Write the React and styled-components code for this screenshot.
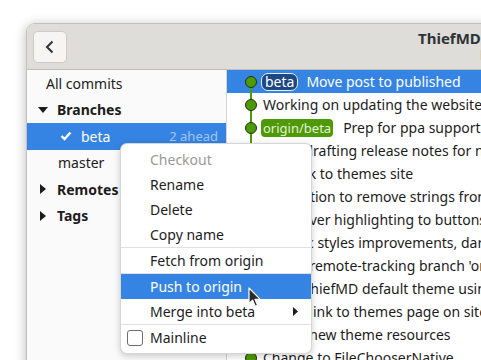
import React from "react";
import styled, { createGlobalStyle } from "styled-components";

const GlobalStyle = createGlobalStyle`
  html, body {
    margin: 0;
    padding: 0;
    background: #ffffff;
  }
  body {
    font-family: "Noto Sans", "DejaVu Sans", sans-serif;
    overflow: hidden;
  }
`;

const Screen = styled.div`
  position: relative;
  width: 481px;
  height: 360px;
  overflow: hidden;
  box-sizing: border-box;
  padding: 23px 0 0 26px;
`;

const Window = styled.div`
  width: 850px;
  height: 420px;
  display: flex;
  flex-direction: column;
  background: #ffffff;
  border: 1px solid rgba(0, 0, 0, 0.24);
  border-bottom: none;
  border-radius: 9px 9px 0 0;
  box-shadow: 0 2px 12px rgba(0, 0, 0, 0.28);
  overflow: hidden;
`;

const HeaderBar = styled.header`
  flex: none;
  height: 46px;
  box-sizing: border-box;
  display: flex;
  align-items: center;
  padding: 0 6px;
  background: #deddda;
  border-bottom: 1px solid #c0bfbc;
`;

const BackButton = styled.button`
  width: 34px;
  height: 32px;
  display: flex;
  align-items: center;
  justify-content: center;
  padding: 0;
  background: #f6f5f4;
  border: 1px solid #cdc9c5;
  border-radius: 5px;
  color: #2e3436;
`;

const TitleBox = styled.div`
  margin-left: 351px;
  display: flex;
  flex-direction: column;
  line-height: 17px;
`;

const Title = styled.div`
  font-size: 15px;
  font-weight: 700;
  color: #2e3436;
`;

const Subtitle = styled.div`
  margin-left: 62px;
  font-size: 12px;
  color: #77767b;
`;

const Body = styled.div`
  flex: 1;
  display: flex;
  min-height: 0;
`;

const Sidebar = styled.nav`
  flex: none;
  width: 200px;
  box-sizing: border-box;
  background: #fafafa;
  border-right: 1px solid #d6d4d1;
`;

const SideRow = styled.div`
  height: 26.5px;
  display: flex;
  align-items: center;
  box-sizing: border-box;
  padding: 0 8px 0 ${(p) => p.$indent}px;
  font-size: 14px;
  font-weight: ${(p) => (p.$bold ? 700 : 400)};
  color: ${(p) => (p.$selected ? "#ffffff" : "#1c1c1c")};
  background: ${(p) => (p.$selected ? "#3584e4" : "transparent")};
`;

const Expander = styled.span`
  width: 16px;
  margin-right: 6px;
  display: flex;
  align-items: center;
  justify-content: center;
`;

const CheckSlot = styled.span`
  width: 16px;
  margin-right: 7px;
  display: flex;
  align-items: center;
  justify-content: center;
`;

const Ahead = styled.span`
  margin-left: auto;
  font-size: 13px;
  color: rgba(255, 255, 255, 0.55);
`;

const CommitList = styled.div`
  flex: 1;
  background: #ffffff;
`;

const CommitRow = styled.div`
  height: 23px;
  display: flex;
  align-items: center;
  white-space: nowrap;
  font-size: 14px;
  color: ${(p) => (p.$selected ? "#ffffff" : "#1c1c1c")};
  background: ${(p) => (p.$selected ? "#3584e4" : "transparent")};
`;

const Graph = styled.span`
  position: relative;
  flex: none;
  width: 34px;
  height: 100%;

  &::before {
    content: "";
    position: absolute;
    left: 23px;
    width: 2px;
    top: ${(p) => (p.$first ? "50%" : "0")};
    bottom: 0;
    background: #4e9a06;
  }
`;

const Dot = styled.span`
  position: absolute;
  left: 18px;
  top: 50%;
  width: 12px;
  height: 12px;
  margin-top: -6px;
  box-sizing: border-box;
  border-radius: 50%;
  background: #4e9a06;
  border: 1px solid #1f3307;
`;

const Tag = styled.span`
  flex: none;
  height: 18px;
  display: inline-flex;
  align-items: center;
  box-sizing: border-box;
  padding: 0 ${(p) => (p.$remote ? 2 : 3)}px;
  margin-right: ${(p) => (p.$remote ? 8 : 6)}px;
  font-size: ${(p) => (p.$remote ? 13 : 14)}px;
  border-radius: ${(p) => (p.$remote ? 4 : 7)}px;
  color: ${(p) => (p.$remote ? "#e4f0d8" : "#ffffff")};
  background: ${(p) => (p.$remote ? "#4e9a06" : "#1c4886")};
  border: ${(p) => (p.$remote ? "none" : "1px solid #e8effa")};
`;

const CommitText = styled.span`
  margin-left: 2px;
`;

const Menu = styled.div`
  position: absolute;
  left: 120px;
  top: 143px;
  width: 192px;
  box-sizing: border-box;
  padding: 3px 0;
  background: #ffffff;
  border: 1px solid rgba(0, 0, 0, 0.16);
  border-radius: 7px;
  box-shadow: 0 2px 7px rgba(0, 0, 0, 0.2);
  font-size: 14px;
`;

const MenuItem = styled.div`
  height: 25px;
  display: flex;
  align-items: center;
  padding: 0 13px 0 6px;
  color: ${(p) => (p.$disabled ? "#9a9996" : p.$active ? "#ffffff" : "#1c1c1c")};
  background: ${(p) => (p.$active ? "#3584e4" : "transparent")};
`;

const Lead = styled.span`
  width: 16px;
  height: 16px;
  margin-right: 7px;
  flex: none;
`;

const CheckBox = styled(Lead)`
  box-sizing: border-box;
  border: 1px solid #6f6f6f;
  border-radius: 3px;
  background: #ffffff;
`;

const SubArrow = styled.svg`
  margin-left: auto;
`;

const Separator = styled.div`
  height: 1px;
  background: #e2e0de;
`;

const Cursor = styled.svg`
  position: absolute;
  left: 248px;
  top: 287px;
`;

const DownTri = () => (
  <svg width="10" height="6" viewBox="0 0 10 6">
    <polygon points="0,0 10,0 5,6" fill="#1c1c1c" />
  </svg>
);

const RightTri = () => (
  <svg width="6" height="10" viewBox="0 0 6 10">
    <polygon points="0,0 6,5 0,10" fill="#1c1c1c" />
  </svg>
);

const commits = [
  { text: "Move post to published", tag: "beta", selected: true },
  { text: "Working on updating the website" },
  { text: "Prep for ppa support", remote: "origin/beta" },
  { text: "Begin drafting release notes for next release" },
  { text: "Add link to themes site" },
  { text: "Add option to remove strings from export" },
  { text: "Add hover highlighting to buttons" },
  { text: "Generic styles improvements, dark mode fixes" },
  { text: "Merge remote-tracking branch 'origin/master'" },
  { text: "Make ThiefMD default theme using system colors" },
  { text: "Added link to themes page on site" },
  { text: "Added new theme resources" },
  { text: "Change to FileChooserNative" },
];

export default function App() {
  return (
    <>
      <GlobalStyle />
      <Screen>
        <Window>
          <HeaderBar>
            <BackButton>
              <svg width="16" height="16" viewBox="0 0 16 16">
                <path d="M10.5 2.5 L5 8 L10.5 13.5" fill="none" stroke="#2e3436" strokeWidth="2" />
              </svg>
            </BackButton>
            <TitleBox>
              <Title>ThiefMD</Title>
              <Subtitle>beta</Subtitle>
            </TitleBox>
          </HeaderBar>
          <Body>
            <Sidebar>
              <SideRow $indent={19}>All commits</SideRow>
              <SideRow $indent={8} $bold>
                <Expander><DownTri /></Expander>
                Branches
              </SideRow>
              <SideRow $indent={31} $selected>
                <CheckSlot>
                  <svg width="12" height="10" viewBox="0 0 12 10">
                    <path d="M1.5 5 L4.5 8 L10.5 1.5" fill="none" stroke="#ffffff" strokeWidth="2.4" />
                  </svg>
                </CheckSlot>
                beta
                <Ahead>2 ahead</Ahead>
              </SideRow>
              <SideRow $indent={31}>master</SideRow>
              <SideRow $indent={8} $bold>
                <Expander><RightTri /></Expander>
                Remotes
              </SideRow>
              <SideRow $indent={8} $bold>
                <Expander><RightTri /></Expander>
                Tags
              </SideRow>
            </Sidebar>
            <CommitList>
              {commits.map((c, i) => (
                <CommitRow key={i} $selected={c.selected}>
                  <Graph $first={i === 0}>
                    <Dot />
                  </Graph>
                  {c.tag && <Tag>{c.tag}</Tag>}
                  {c.remote && <Tag $remote>{c.remote}</Tag>}
                  <CommitText>{c.text}</CommitText>
                </CommitRow>
              ))}
            </CommitList>
          </Body>
        </Window>

        <Menu>
          <MenuItem $disabled><Lead />Checkout</MenuItem>
          <MenuItem><Lead />Rename</MenuItem>
          <MenuItem><Lead />Delete</MenuItem>
          <MenuItem><Lead />Copy name</MenuItem>
          <Separator />
          <MenuItem><Lead />Fetch from origin</MenuItem>
          <Separator />
          <MenuItem $active><Lead />Push to origin</MenuItem>
          <MenuItem>
            <Lead />Merge into beta
            <SubArrow width="5" height="9" viewBox="0 0 5 9">
              <polygon points="0,0 5,4.5 0,9" fill="#1c1c1c" />
            </SubArrow>
          </MenuItem>
          <Separator />
          <MenuItem><CheckBox />Mainline</MenuItem>
        </Menu>

        <Cursor width="14" height="21" viewBox="0 0 14 21">
          <path
            d="M1 1 L1 16.5 L4.6 13.2 L7.2 19.2 L9.6 18.2 L7.1 12.4 L12 12.2 Z"
            fill="#2a2a2a"
            stroke="#ffffff"
            strokeWidth="1.2"
            strokeLinejoin="round"
          />
        </Cursor>
      </Screen>
    </>
  );
}
